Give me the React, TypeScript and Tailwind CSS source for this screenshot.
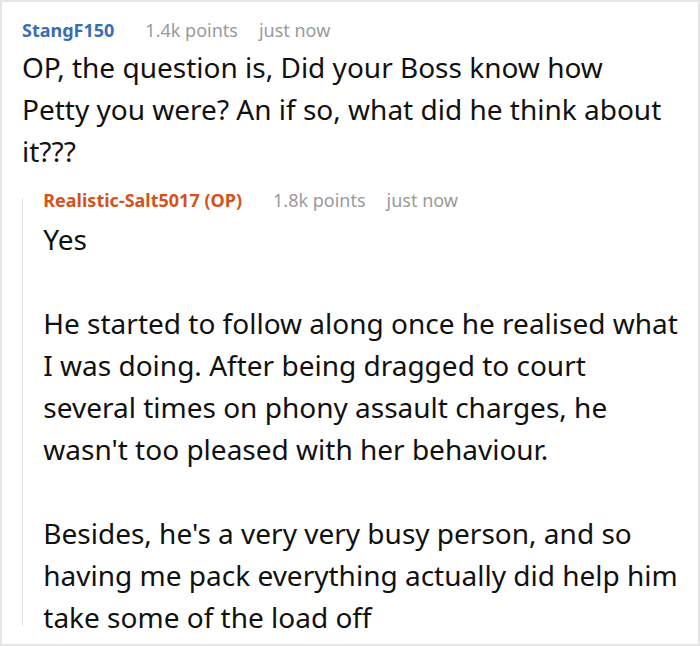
export default function App() {
  return (
    <div className="h-[646px] w-[700px] overflow-hidden border-2 border-[#e6e6e6] bg-white font-['Noto_Sans',sans-serif] text-[#111]">
      <div className="pl-[20px] pt-[16px]">
        <div className="flex items-baseline text-[18px] leading-[24px]">
          <span className="font-bold text-[#3a6db3]">StangF150</span>
          <span className="ml-[31px] text-[#9a9a9a]">1.4k points</span>
          <span className="ml-[21px] text-[#9a9a9a]">just now</span>
        </div>
        <p className="mt-[4px] pr-[32px] text-[28px] leading-[42px]">
          OP, the question is, Did your Boss know how Petty you were? An if so,
          what did he think about it???
        </p>

        <div className="mt-[16px] flex">
          <div className="mt-[10px] mb-[12px] w-px bg-[#e2e2e2]" />
          <div className="pl-[21px]">
            <div className="flex items-baseline text-[18px] leading-[24px]">
              <span className="font-bold text-[#d4531c]">
                Realistic-Salt5017 (OP)
              </span>
              <span className="ml-[31px] text-[#9a9a9a]">1.8k points</span>
              <span className="ml-[21px] text-[#9a9a9a]">just now</span>
            </div>
            <div className="mt-[6px] pr-[14px] text-[28px] leading-[42px]">
              <p>Yes</p>
              <p className="mt-[42px]">
                He started to follow along once he realised what I was doing.
                After being dragged to court several times on phony assault
                charges, he wasn't too pleased with her behaviour.
              </p>
              <p className="mt-[42px]">
                Besides, he's a very very busy person, and so having me pack
                everything actually did help him take some of the load off
              </p>
            </div>
          </div>
        </div>
      </div>
    </div>
  );
}
